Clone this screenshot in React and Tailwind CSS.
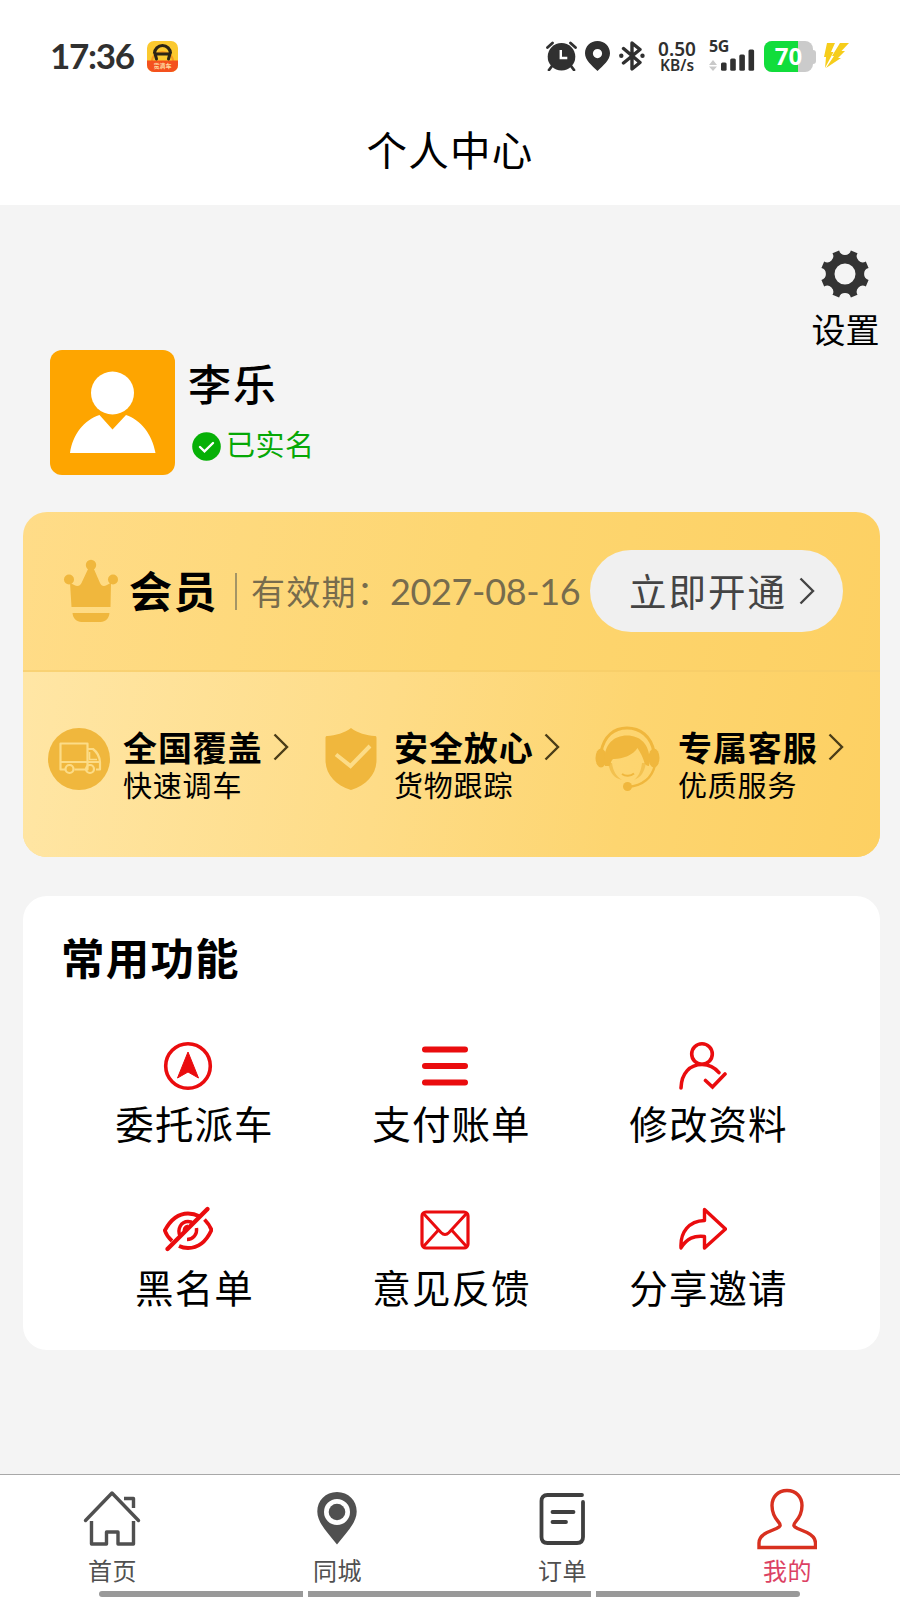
import { useState } from "react";
import clsx from "clsx";

// ---------- Status bar ----------

function AppBadge() {
  return (
    <div className="relative w-[31px] h-[31px] rounded-[7px] overflow-hidden bg-[#fbc92f]">
      <svg viewBox="0 0 31 31" className="w-full h-full" fill="none">
        <path d="M5 20a10.500 9 0 0 1 21 0" stroke="#f79a1e" strokeWidth="2" />
        <path d="M0 19.500h31V31H0z" fill="#f4511e" />
        <path d="M7.500 12.500a8 8 0 0 1 16 0" stroke="#2b2416" strokeWidth="3.200" />
        <path d="M8 12.500l1.500 5.500M23 12.500l-1.500 5.500M9.500 13h12" stroke="#2b2416" strokeWidth="3" strokeLinecap="round" />
      </svg>
      <span className="absolute inset-x-0 bottom-[2px] text-center text-[6px] leading-[8px] font-bold text-[#ffd9a0]">
        货滴车
      </span>
    </div>
  );
}

function AlarmIcon() {
  return (
    <svg viewBox="0 0 31 30" className="w-[31px] h-[30px]" fill="none">
      <circle cx="15.500" cy="15.800" r="13.800" fill="#303030" />
      <path d="M1.500 6.500l5-4.500M29.500 6.500l-5-4.500" stroke="#303030" strokeWidth="2.800" strokeLinecap="round" />
      <path d="M6 25l-3 4M25 25l3 4" stroke="#303030" strokeWidth="2.800" strokeLinecap="round" />
      <path d="M14.800 9v8h6.500" stroke="#fff" strokeWidth="2.400" />
    </svg>
  );
}

function LocationIcon() {
  return (
    <svg viewBox="0 0 25 30" className="w-[25px] h-[30px]">
      <path
        fill="#303030"
        fillRule="evenodd"
        d="M12.500 0C5.400 0 0 5.400 0 12.300 0 19.500 7 24.500 12.500 30 18 24.500 25 19.500 25 12.300 25 5.400 19.600 0 12.500 0zm0 8a4.600 4.600 0 1 1 0 9.200 4.600 4.600 0 0 1 0-9.200z"
      />
    </svg>
  );
}

function BluetoothIcon() {
  return (
    <svg viewBox="0 0 26 30" className="w-[26px] h-[30px]" fill="none">
      <path d="M4.500 7.500L21 21.500l-8 6.500V2l8 6.500L4.500 22" stroke="#303030" strokeWidth="3.400" strokeLinejoin="round" strokeLinecap="round" />
      <circle cx="2.300" cy="14.800" r="2.200" fill="#303030" />
      <circle cx="23.500" cy="14.800" r="2.200" fill="#303030" />
    </svg>
  );
}

function SignalIcon() {
  return (
    <svg viewBox="0 0 46 30" className="w-[46px] h-[30px]">
      <path d="M0 24l4-5 4 5zM0 25.500l4 4.500 4-4.500z" fill="#c9c9c9" />
      <rect x="12" y="21.500" width="5.600" height="8.300" rx="1.500" fill="#303030" />
      <rect x="21.200" y="17.500" width="5.600" height="12.300" rx="1.500" fill="#303030" />
      <rect x="30.300" y="13.500" width="5.600" height="16.300" rx="1.500" fill="#303030" />
      <rect x="39.500" y="8.500" width="5.600" height="21.300" rx="1.500" fill="#303030" />
    </svg>
  );
}

function Battery({ level }) {
  return (
    <div className="flex items-center">
      <div className="relative w-[49px] h-[31px] rounded-[8px] overflow-hidden bg-[#cbcbcb]">
        <div className="h-full bg-[#11dd3b]" style={{ width: `${level}%` }} />
        <span className="absolute inset-0 text-center text-[24px] leading-[29px] font-bold text-white font-['Noto_Sans']">
          {level}
        </span>
      </div>
      <div className="w-[3px] h-[14px] rounded-r-[3px] bg-[#cbcbcb]" />
    </div>
  );
}

function StatusBar() {
  return (
    <div className="flex h-[112px] pt-[41px] pl-[50px] items-start text-[#303030]">
      <span className="w-[97px] text-[35px] leading-[29px] font-bold tracking-[-1.300px] font-['Lato']">17:36</span>
      <AppBadge />
      <div className="ml-[368px] flex items-start">
        <AlarmIcon />
        <div className="ml-2">
          <LocationIcon />
        </div>
        <div className="ml-[9px]">
          <BluetoothIcon />
        </div>
        <div className="ml-[12px] w-[40px] text-center font-semibold font-['Noto_Sans']">
          <div className="text-[19px] leading-[16px]">0.50</div>
          <div className="text-[15.500px] leading-[16px]">KB/s</div>
        </div>
        <div className="relative ml-[12px]">
          <SignalIcon />
          <span className="absolute left-0 top-[-3px] text-[16px] leading-[16px] font-bold tracking-[-0.500px] font-['Noto_Sans']">5G</span>
        </div>
        <div className="ml-[9px]">
          <Battery level={70} />
        </div>
        <svg viewBox="0 0 25 26" className="ml-[8px] mt-[2px] w-[25px] h-[26px]" fill="#f6cd1b">
          <path d="M3 0h8L7 9l2.500 0L1 25l1-11H0z" />
          <path d="M16 0h9l-7.500 8H21L14 15h3L2 25l8-12H8z" />
        </svg>
      </div>
    </div>
  );
}

// ---------- Shared icons ----------

// Eight flat teeth separated by round notches
const gearPath = (() => {
  const pt = (deg) => {
    const a = (deg * Math.PI) / 180;
    return `${(24 + 24.3 * Math.sin(a)).toFixed(2)} ${(24 - 24.3 * Math.cos(a)).toFixed(2)}`;
  };
  let d = `M${pt(14)}`;
  for (let i = 0; i < 8; i++) {
    const base = i * 45;
    d += `L${pt(base + 31)}A6.1 6.1 0 0 0 ${pt(base + 59)}`;
  }
  return `${d}Z M24 13.500a10.500 10.500 0 1 0 0 21a10.500 10.500 0 1 0 0-21z`;
})();

function GearIcon() {
  return (
    <svg viewBox="0 0 48 48" className="w-12 h-12 mr-[2px]">
      <path d={gearPath} fill="#333" fillRule="evenodd" />
    </svg>
  );
}

function Chevron({ className }) {
  return (
    <svg viewBox="0 0 16 28" className={clsx("w-4 h-7 shrink-0", className)} fill="none">
      <path d="M1.500 1.500L14 14 1.500 26.500" stroke="currentColor" strokeWidth="2.400" />
    </svg>
  );
}

// ---------- Profile ----------

function Avatar() {
  return (
    <div className="w-[125px] h-[125px] rounded-[12px] bg-[#fea500]">
      <svg viewBox="0 0 125 125" className="w-full h-full" fill="#fff">
        <circle cx="62.500" cy="43" r="21.500" />
        <path d="M20 103C23 84 34 70 49.500 65L62.500 79.500 76 65C91 70 102 84 105.500 103z" />
      </svg>
    </div>
  );
}

function Profile() {
  return (
    <section className="h-[307px]">
      <div className="flex justify-end h-[145px] pt-[45px] pr-[19px]">
        <button className="flex flex-col items-center w-[71px]">
          <GearIcon />
          <span className="mt-[11px] text-[34px] leading-[40px] whitespace-nowrap">设置</span>
        </button>
      </div>
      <div className="flex pl-[50px]">
        <Avatar />
        <div className="ml-[13px]">
          <h2 className="mt-[6px] text-[43px] leading-[52px] font-medium tracking-[2px]">李乐</h2>
          <div className="mt-[17px] flex items-center ml-[4px]">
            <svg viewBox="0 0 29 29" className="w-[29px] h-[29px] mt-[6px]" fill="none">
              <circle cx="14.500" cy="14.500" r="14.300" fill="#06b006" />
              <path d="M8 15l4.500 4.300L21 11" stroke="#fff" strokeWidth="2.400" strokeLinecap="round" />
            </svg>
            <span className="ml-[5px] text-[29px] leading-[36px] tracking-[0.500px] text-[#06a806]">已实名</span>
          </div>
        </div>
      </div>
    </section>
  );
}

// ---------- Membership ----------

function CrownIcon() {
  return (
    <svg viewBox="0 0 56 64" className="w-14 h-16" fill="#f0b73d">
      <circle cx="28" cy="6" r="5.200" />
      <circle cx="6" cy="20.500" r="5" />
      <circle cx="50" cy="20.500" r="5" />
      <path d="M25.500 9h5L37 24c2 4 5 4 11-.5L47.500 48h-39L7 23.500c6 4.500 9.500 4.500 11.500.5z" />
      <path d="M9.500 54h37c-.5 5.500-4 9-9 9h-19c-5 0-8.500-3.500-9-9z" />
    </svg>
  );
}

function TruckIcon() {
  return (
    <svg viewBox="0 0 62 62" className="w-[62px] h-[62px]" fill="none">
      <circle cx="31" cy="31" r="31" fill="#f0b73d" />
      <g stroke="#fcdc87" strokeWidth="2.200" strokeLinejoin="round">
        <path d="M17 41.500h-4.500V15.500h27v26H26.500M12.500 34H52" />
        <path d="M39.500 21h5.500c4 3 6.500 7.500 7 13v7.500h-4M39.500 41.500h-1" />
        <path d="M41.500 24v7.500H49" strokeWidth="1.600" />
        <circle cx="21.500" cy="41" r="4" />
        <circle cx="42" cy="41" r="4" />
      </g>
    </svg>
  );
}

function ShieldIcon() {
  return (
    <svg viewBox="0 0 52 62" className="w-[52px] h-[62px]" fill="none">
      <path d="M26 0C20 5 10 7.500 2.500 8 1 8 .5 8.500.5 10v22C.5 46 10 57 26 62 42 57 51.500 46 51.500 32V10c0-1.500-.5-2-2-2C42 7.500 32 5 26 0z" fill="#f0b73d" />
      <path d="M11 26.500l14.500 11.500L45 18" stroke="#fcdc87" strokeWidth="4" />
    </svg>
  );
}

function ServiceIcon() {
  return (
    <svg viewBox="0 0 66 68" className="w-[66px] h-[68px]" fill="none">
      <path d="M6 27C9 11 19 3 32 3s24 8 27 24" stroke="#f0b73d" strokeWidth="3" />
      <path d="M60 40C57 53 47 60.500 33 62" stroke="#f0b73d" strokeWidth="2.400" />
      <path d="M13 38c2 10 6 15 14 17-6-4-9-9-10-17zM51 38c-2 10-5 14-12 17 5-4 7-9 8-17z" fill="#f3c14f" />
      <ellipse cx="6" cy="33" rx="5.500" ry="9.500" fill="#f0b73d" />
      <ellipse cx="59" cy="33" rx="5.500" ry="9.500" fill="#f0b73d" />
      <path
        d="M10 41C7 22 17 10.500 32 10.500S57 22 54 41c-2 0-3.500-1-4.500-3C48 32 45 27 42.500 23 38 30 28 34 19 34c-3 0-3 5-4.500 7z"
        fill="#f0b73d"
      />
      <path d="M27 49c3.500 2.500 8.500 2.500 12-.5" stroke="#f0b73d" strokeWidth="2" />
      <circle cx="32.500" cy="61.500" r="4.500" fill="#f0b73d" />
    </svg>
  );
}

const benefits = [
  { title: "全国覆盖", desc: "快速调车", icon: TruckIcon, box: "w-[271px]", iconBox: "w-[75px]" },
  { title: "安全放心", desc: "货物跟踪", icon: ShieldIcon, box: "w-[276px] pl-[6px]", iconBox: "w-[69px]" },
  { title: "专属客服", desc: "优质服务", icon: ServiceIcon, box: "w-[260px]", iconBox: "w-[83px]" },
];

function MemberCard() {
  return (
    <section className="pl-[23px] pr-[20px]">
      <div className="h-[345px] rounded-[24px] overflow-hidden bg-[linear-gradient(100deg,#ffdc88_0%,#fdd671_50%,#fdd062_100%)]">
        <div className="flex items-center h-[160px] pl-[40px] border-b-2 border-[#f5cb69]/60">
          <CrownIcon />
          <span className="ml-[10px] w-[96px] text-[43px] leading-[60px] font-bold tracking-[1.500px] -mt-[4px]">会员</span>
          <span className="ml-[10px] w-[2px] h-[37px] bg-[#a49566]" />
          <span className="ml-[14px] w-[139px] text-[34px] leading-[40px] tracking-[1.200px] whitespace-nowrap text-[#776c4d]">有效期：</span>
          <span className="w-[200px] text-[36px] leading-[40px] tracking-[-0.350px] text-[#776c4d] whitespace-nowrap font-['Lato']">2027-08-16</span>
          <button className="flex items-center w-[253px] h-[82px] rounded-full bg-[#f0f0f0] pl-[39px] text-[#444]">
            <span className="w-[170px] -mt-[2px] text-left text-[37.500px] leading-[50px] tracking-[2px]">立即开通</span>
            <Chevron />
          </button>
        </div>
        <div className="flex h-[185px] pt-[53px] pl-[25px] bg-[linear-gradient(100deg,#ffe6a5_0%,#fedc87_42%,#fdd570_70%,#fdd062_100%)]">
          {benefits.map(({ title, desc, icon: Icon, box, iconBox }) => (
            <div key={title} className={clsx("flex shrink-0", box)}>
              <div className={clsx("flex items-center h-[68px] shrink-0", iconBox)}>
                <Icon />
              </div>
              <div className="pt-px">
                <div className="flex items-center h-[42px]">
                  <span className="w-[150px] text-[34px] leading-[42px] font-bold tracking-[0.900px]">{title}</span>
                  <Chevron className="text-[#4a3d18]" />
                </div>
                <p className="text-[29px] leading-[32px] tracking-[0.800px]">{desc}</p>
              </div>
            </div>
          ))}
        </div>
      </div>
    </section>
  );
}

// ---------- Common functions ----------

function DispatchIcon() {
  return (
    <>
      <circle cx="25" cy="25" r="22.300" strokeWidth="3.600" />
      <path d="M25 11L35.500 37 25 31 14.500 37z" fill="currentColor" strokeWidth="1" strokeLinejoin="round" />
    </>
  );
}

function BillIcon() {
  return <path d="M5 8.500h40M5 25h40M5 41.500h40" strokeWidth="6" strokeLinecap="round" />;
}

function EditUserIcon() {
  return (
    <>
      <circle cx="25" cy="13" r="10.300" strokeWidth="3.600" />
      <path d="M4 47C4.500 32 13 23.500 25 23.500c7 0 12.500 2.700 17 8.200" strokeWidth="3.600" strokeLinecap="round" />
      <path d="M28.500 39.500l7 6.500L48 33" strokeWidth="3.600" strokeLinecap="round" />
    </>
  );
}

function BlockIcon() {
  return (
    <>
      <path d="M9 36C5 32.500 3 29 1.800 25.500 8 14 16 8.500 25 8.500c5 0 8.500 1.300 12 3" strokeWidth="3.800" />
      <path d="M41.500 14.500c3 3 5.500 6.500 7 10.500C43 37 35 43 25 43c-3.500 0-6.500-.8-9-2" strokeWidth="3.800" />
      <path d="M17 31c-3-7 1-14.500 8-14.500 2 0 4 .7 5.500 2M33.500 23c1 6.500-3.500 11.500-9.500 11.500" strokeWidth="3.400" />
      <path d="M21.500 27.500c-1.500-3 0-6 3.500-6.500" strokeWidth="2.800" />
      <path d="M4.500 44L44.500 4" strokeWidth="4.400" strokeLinecap="round" />
    </>
  );
}

function MailIcon() {
  return (
    <>
      <rect x="2" y="7" width="46" height="36" rx="4" strokeWidth="3.200" />
      <path d="M3.500 8.500L21 27.500c2.500 2.500 5.500 2.500 8 0L46.500 8.500M3.500 41.500l14.500-16M46.500 41.500L32 25.500" strokeWidth="3" />
    </>
  );
}

function ShareIcon() {
  return (
    <path
      d="M27.500 4.500L48.500 24 27.500 43V31.500C17 30.500 10 33 4 43 3 27 12 16 27.500 15.500z"
      strokeWidth="3.400"
      strokeLinejoin="round"
    />
  );
}

const functions = [
  { label: "委托派车", icon: DispatchIcon },
  { label: "支付账单", icon: BillIcon },
  { label: "修改资料", icon: EditUserIcon },
  { label: "黑名单", icon: BlockIcon },
  { label: "意见反馈", icon: MailIcon },
  { label: "分享邀请", icon: ShareIcon },
];

function FunctionCard() {
  return (
    <section className="mt-[39px] ml-[23px] mr-[20px] h-[454px] rounded-[24px] bg-white pt-[33px]">
      <h3 className="pl-[38px] text-[43.500px] leading-[56px] font-bold tracking-[1.200px]">常用功能</h3>
      <div className="mt-[56px] px-[43px] grid grid-cols-3">
        {functions.map(({ label, icon: Icon }) => (
          <button key={label} className="flex flex-col items-center h-[163.500px]">
            <svg viewBox="0 0 50 50" className="w-[50px] h-[50px] mr-[14px] text-[#ea0c0e]" fill="none" stroke="currentColor">
              <Icon />
            </svg>
            <span className="mt-[6px] text-[38.500px] leading-[50px] tracking-[1.100px] whitespace-nowrap">{label}</span>
          </button>
        ))}
      </div>
    </section>
  );
}

// ---------- Tab bar ----------

function HomeIcon() {
  return (
    <g stroke="currentColor" strokeWidth="3.400" strokeLinejoin="round">
      <path d="M3.500 32.500L30 5l26.500 27.500" strokeLinecap="round" />
      <path d="M42 10.500h9.500V20" />
      <path d="M9.500 33v23h15V44h11.500v12h15.500V33" />
    </g>
  );
}

function CityIcon() {
  return (
    <>
      <path
        fill="currentColor"
        fillRule="evenodd"
        d="M30 4C18.500 4 10.300 12.500 10.300 23.500 10.300 35 21 45 30 56.500 39 45 49.700 35 49.700 23.500 49.700 12.500 41.500 4 30 4zm0 7a13 13 0 1 1 0 26 13 13 0 0 1 0-26z"
      />
      <circle cx="30" cy="24" r="8.300" fill="currentColor" />
    </>
  );
}

function OrderIcon() {
  return (
    <g stroke="#3f3f3f" strokeWidth="3.800" strokeLinecap="round">
      <path d="M50 7H15.500Q9.500 7 9.500 13v36q0 6 6 6h29.500q6 0 6-6V14" />
      <path d="M20.500 24h21M20.500 34h13.500" />
    </g>
  );
}

function MineIcon() {
  return (
    <path
      d="M30 2.500C20.500 2.500 15 9.500 15 17.500c0 7 2.500 12 6.500 16.500 3 3.500 1.500 5-1.500 6.200L10 44.500C4 47.500 2 50.500 2 55v4.500h56.500V55c0-4.500-2.500-7.500-8.500-10.500l-10-4.300c-3-1.200-4.500-2.700-1.500-6.200 4-4.500 6.500-9.500 6.500-16.500 0-8-5.500-15-15-15z"
      stroke="#d8301f"
      strokeWidth="3.400"
    />
  );
}

const tabs = [
  { label: "首页", icon: HomeIcon },
  { label: "同城", icon: CityIcon },
  { label: "订单", icon: OrderIcon },
  { label: "我的", icon: MineIcon },
];

function TabBar() {
  const [active, setActive] = useState("我的");

  return (
    <nav className="relative h-[126px] border-t border-[#a8a8a8] bg-white">
      <div className="grid grid-cols-4">
        {tabs.map(({ label, icon: Icon }) => (
          <button key={label} onClick={() => setActive(label)} className="flex flex-col items-center pt-[13px] text-[#505050]">
            <svg viewBox="0 0 60 62" className="w-[60px] h-[62px] mr-[2px]" fill="none">
              <Icon />
            </svg>
            <span
              className={clsx(
                "mt-[5px] text-[24px] leading-[30px] tracking-[0.500px]",
                active === label && "text-[#dc4163]"
              )}
            >
              {label}
            </span>
          </button>
        ))}
      </div>
      {/* Gesture handle */}
      <div className="absolute left-[99px] right-[100px] bottom-[3px] flex gap-[5px] h-[6px]">
        <div className="w-[204px] rounded-l-full bg-[#999]" />
        <div className="flex-1 bg-[#999]" />
        <div className="w-[204px] rounded-r-full bg-[#999]" />
      </div>
    </nav>
  );
}

export default function App() {
  return (
    <div className="flex flex-col w-[900px] h-[1600px] overflow-hidden bg-[#f4f4f4] text-black font-['Noto_Sans_CJK_SC',sans-serif]">
      <header className="h-[205px] shrink-0 bg-white">
        <StatusBar />
        <h1 className="text-center text-[40.500px] leading-[74px] tracking-[1.200px]">个人中心</h1>
      </header>
      <main className="flex-1">
        <Profile />
        <MemberCard />
        <FunctionCard />
      </main>
      <TabBar />
    </div>
  );
}
